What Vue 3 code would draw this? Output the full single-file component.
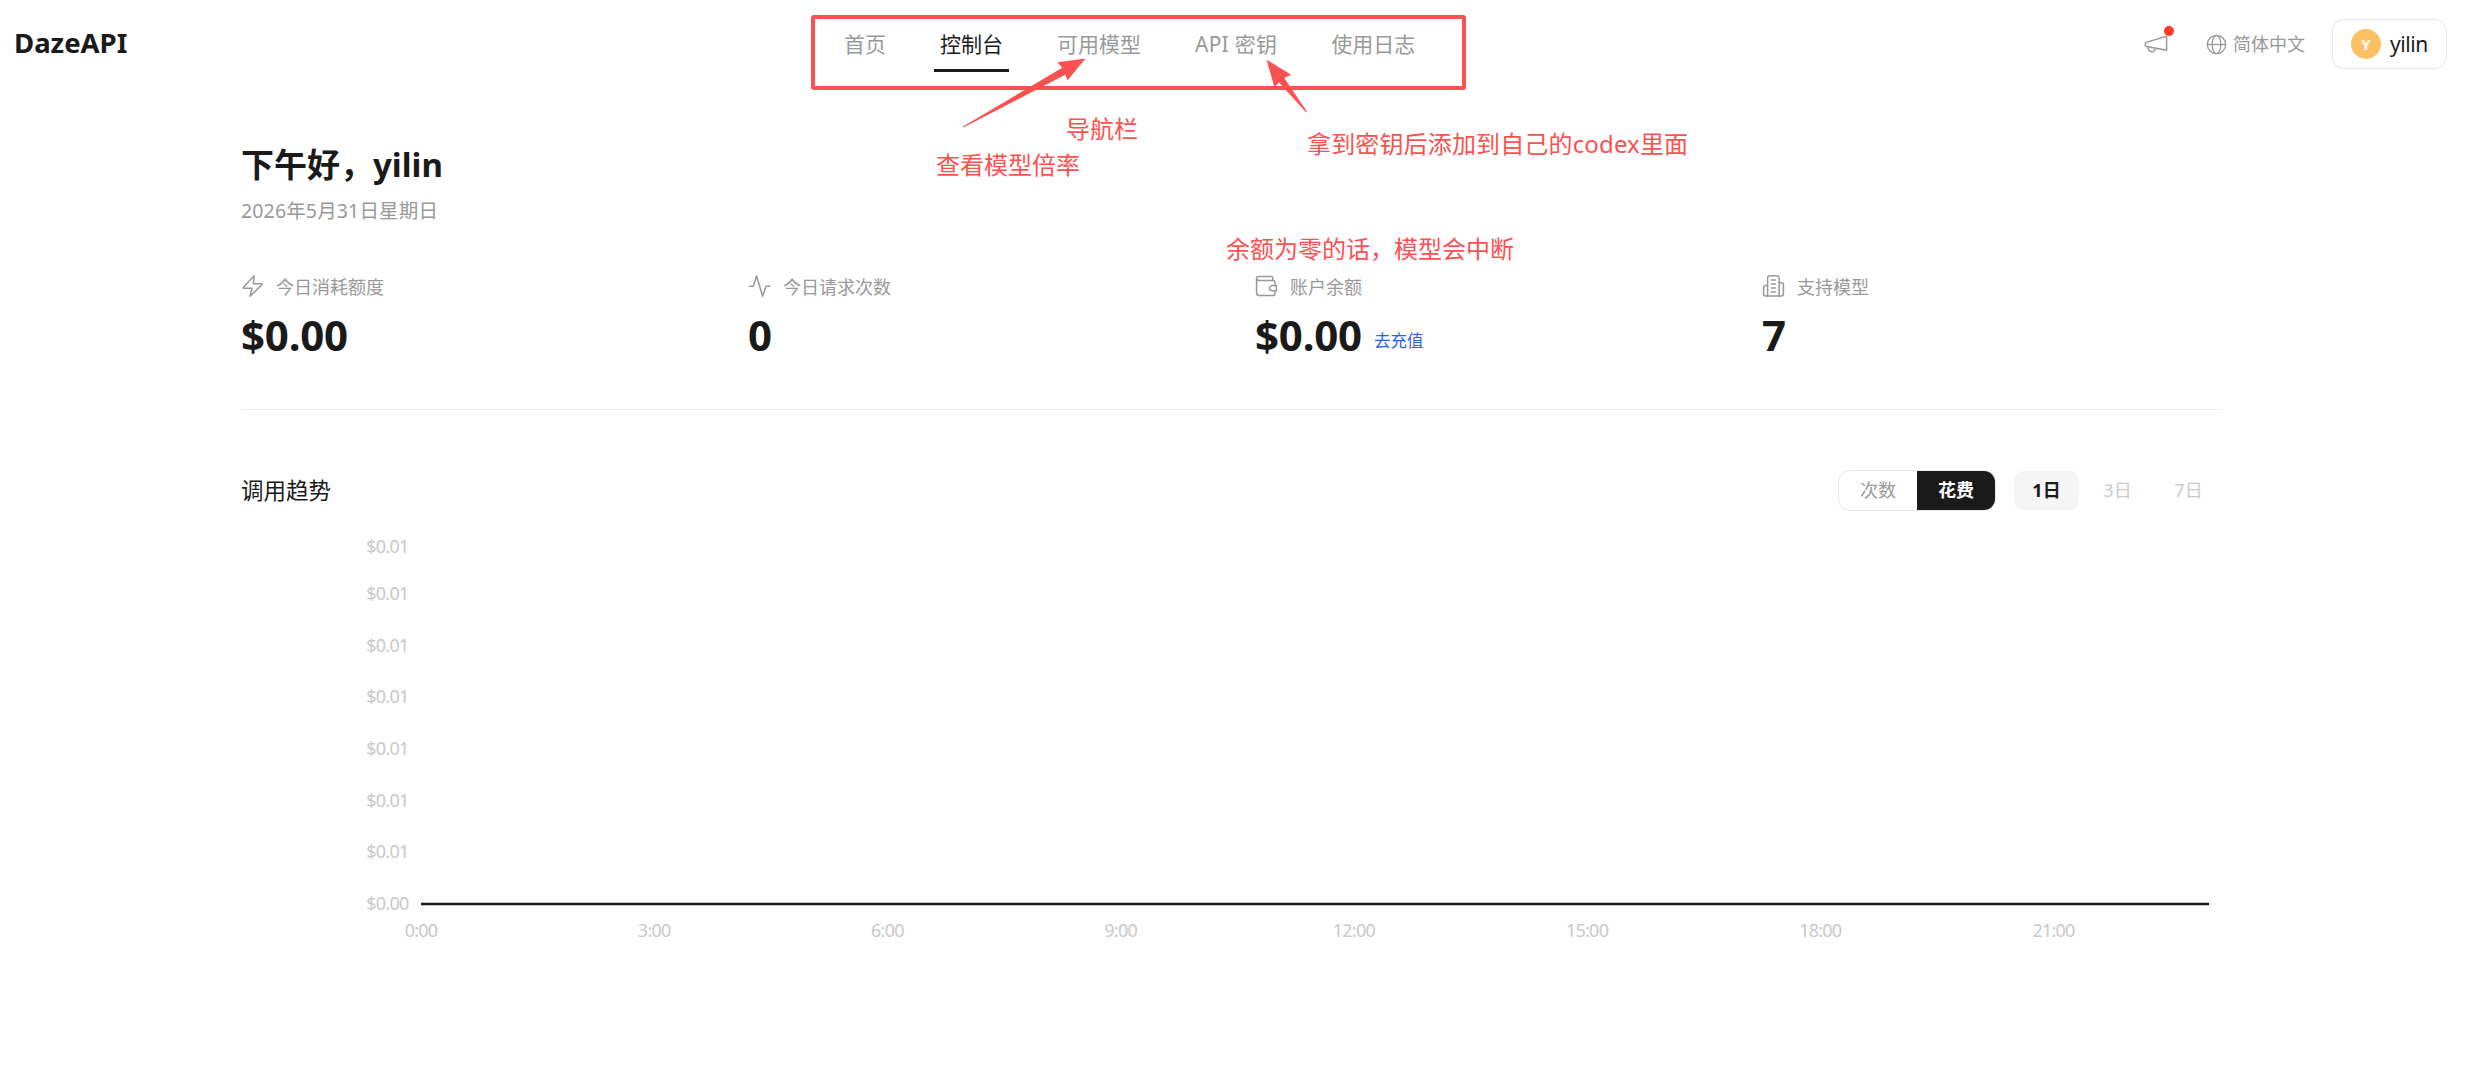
<script setup>
import { ref, computed } from 'vue'

const navItems = [
  { key: 'home', label: '首页' },
  { key: 'console', label: '控制台' },
  { key: 'models', label: '可用模型' },
  { key: 'keys', label: 'API 密钥' },
  { key: 'logs', label: '使用日志' },
]
const activeNav = ref('console')

const stats = [
  { key: 'cost', label: '今日消耗额度', value: '$0.00' },
  { key: 'requests', label: '今日请求次数', value: '0' },
  { key: 'balance', label: '账户余额', value: '$0.00', link: '去充值' },
  { key: 'models', label: '支持模型', value: '7' },
]

const metrics = ['次数', '花费']
const metric = ref('花费')
const ranges = ['1日', '3日', '7日']
const range = ref('1日')

// 图表坐标
const CHART = { left: 180, right: 1968, base: 374, hours: 23 }
const yLabels = [
  { y: 17, text: '$0.01' },
  { y: 64, text: '$0.01' },
  { y: 116, text: '$0.01' },
  { y: 167, text: '$0.01' },
  { y: 219, text: '$0.01' },
  { y: 271, text: '$0.01' },
  { y: 322, text: '$0.01' },
  { y: 374, text: '$0.00' },
]
const xLabels = computed(() => {
  const step = (CHART.right - CHART.left) / CHART.hours
  return [0, 3, 6, 9, 12, 15, 18, 21].map(h => ({ x: CHART.left + h * step, text: `${h}:00` }))
})
</script>

<template>
  <div class="page" lang="zh-CN">
    <header class="header">
      <div class="brand">DazeAPI</div>
      <nav class="nav">
        <a
          v-for="item in navItems"
          :key="item.key"
          class="nav-item"
          :class="{ active: activeNav === item.key }"
          @click="activeNav = item.key"
        >{{ item.label }}</a>
      </nav>
      <div class="tools">
        <div class="notice">
          <svg width="26" height="22" viewBox="0 0 26 22" fill="none" stroke="#999" stroke-width="1.5" stroke-linejoin="round">
            <path d="M2.4 7.6 L23.6 1.2 V15.3 L2.4 11.2 Z" />
            <path d="M5.2 12 C5.2 18 12.2 18.2 12.2 13.2" />
          </svg>
          <span class="dot"></span>
        </div>
        <div class="lang">
          <svg width="21" height="21" viewBox="0 0 21 21" fill="none" stroke="#999" stroke-width="1.3">
            <circle cx="10.5" cy="10.5" r="9.2" />
            <ellipse cx="10.5" cy="10.5" rx="4.3" ry="9.2" />
            <path d="M1.3 10.5 H19.7" />
          </svg>
          <span>简体中文</span>
        </div>
        <div class="user">
          <span class="avatar">Y</span>
          <span class="user-name">yilin</span>
        </div>
      </div>
    </header>

    <main class="main">
      <h1 class="hello">下午好，yilin</h1>
      <p class="date">2026年5月31日星期日</p>

      <section class="stats">
        <div v-for="s in stats" :key="s.key" class="stat">
          <div class="stat-label">
            <svg width="24" height="24" viewBox="0 0 24 24" fill="none" stroke="#999" stroke-width="1.5" stroke-linecap="round" stroke-linejoin="round">
              <path v-if="s.key === 'cost'" d="M13.2 1.8 L2.4 13.2 Q1.9 14.2 3 14.2 H11 L9 22.2 L20.9 10.8 Q21.4 9.7 20.4 9.7 H12.4 Z" />
              <path v-else-if="s.key === 'requests'" d="M1.6 12.2 H5.2 L8.6 2 L14.6 22.2 L18 12.2 H21.8" />
              <g v-else-if="s.key === 'balance'">
                <path d="M17.8 6.4 V4.2 Q17.8 2.6 16.2 2.6 H3.6 Q1.6 2.6 1.6 4.6 V19.2 Q1.6 21.4 3.8 21.4 H17.8 Q20 21.4 20 19.2 V17" />
                <path d="M1.6 5 Q1.9 6.4 3.6 6.4 H17.8 Q20 6.4 20 8.6 V11.4" />
                <path d="M21.4 11.6 H17.4 Q14.6 11.9 14.6 14.2 Q14.6 16.4 17.4 16.7 H21.4 Z" />
              </g>
              <g v-else>
                <path d="M5.6 22 V4 Q5.6 1.8 7.8 1.8 H15 Q17.2 1.8 17.2 4 V22" />
                <path d="M5.6 11.4 H3.8 Q1.6 11.4 1.6 13.6 V19.8 Q1.6 22 3.8 22 H19.2 Q21.4 22 21.4 19.8 V10.8 Q21.4 8.8 19.4 8.8 H17.2" />
                <path d="M9.4 6 H13.4 M9.4 10 H13.4 M9.4 14 H13.4 M9.4 18 H13.4" />
              </g>
            </svg>
            <span>{{ s.label }}</span>
          </div>
          <div class="stat-value">
            <span>{{ s.value }}</span>
            <a v-if="s.link" class="recharge">{{ s.link }}</a>
          </div>
        </div>
      </section>

      <section class="trend">
        <div class="trend-head">
          <h2 class="trend-title">调用趋势</h2>
          <div class="filters">
            <div class="segment">
              <button v-for="m in metrics" :key="m" :class="{ on: metric === m }" @click="metric = m">{{ m }}</button>
            </div>
            <div class="ranges">
              <button v-for="r in ranges" :key="r" :class="{ on: range === r }" @click="range = r">{{ r }}</button>
            </div>
          </div>
        </div>
        <svg class="chart" width="1980" height="420" viewBox="0 0 1980 420">
          <text v-for="l in yLabels" :key="l.y" class="tick tick-y" x="167.5" :y="l.y + 5.5">{{ l.text }}</text>
          <line :x1="CHART.left" :x2="CHART.right" :y1="CHART.base" :y2="CHART.base" stroke="#1a1a1a" stroke-width="2.4" />
          <text v-for="l in xLabels" :key="l.text" class="tick tick-x" :x="l.x" y="407">{{ l.text }}</text>
        </svg>
      </section>
    </main>

    <!-- 说明标注 -->
    <div class="marks">
      <div class="mark-box"></div>
      <svg class="mark-arrows" width="2468" height="140" viewBox="0 0 2468 140" fill="#fc5151">
        <path d="M1085.5 58.5 L1057.3 62.3 L1062.3 67.7 L963 126.5 L963.4 127.5 L1065.3 74.7 L1067.7 80.3 Z" />
        <path d="M1266.6 59.8 L1291.2 74.7 L1284.3 78 L1306.8 111.6 L1306 112.2 L1279 82.5 L1274.3 87 Z" />
      </svg>
      <span class="mark m-nav">导航栏</span>
      <span class="mark m-rate">查看模型倍率</span>
      <span class="mark m-key">拿到密钥后添加到自己的codex里面</span>
      <span class="mark m-balance">余额为零的话，模型会中断</span>
    </div>
  </div>
</template>

<style>
body { margin: 0; background: #fefefe; }
</style>

<style scoped>
.page {
  position: relative; width: 2468px; height: 1070px; overflow: hidden;
  background: #fefefe; color: #1a1a1a;
  font-family: "Noto Sans", "Noto Sans CJK SC", sans-serif;
}
button { font-family: inherit; border: none; background: none; margin: 0; cursor: pointer; }

.header {
  display: grid; grid-template-columns: 838px 1fr auto; align-items: center;
  height: 88px; padding-right: 21px; box-sizing: border-box;
}
.brand { padding: 0 0 3px 14px; font-size: 27.5px; font-weight: 700; }
.nav { display: flex; gap: 42px; }
.nav-item {
  padding: 0 6px 11px; margin-top: 13px; line-height: 28px; font-size: 21px;
  color: #999; border-bottom: 3px solid transparent; white-space: nowrap; cursor: pointer;
}
.nav-item.active { color: #1a1a1a; border-bottom-color: #1a1a1a; }
.nav-item:nth-child(4) { letter-spacing: 0.25px; }

.tools { display: flex; align-items: center; }
.notice { position: relative; display: flex; margin: 3px 37px 0 0; }
.dot { position: absolute; right: -5px; top: -9px; width: 10px; height: 10px; border-radius: 50%; background: #ff3b22; }
.lang { display: flex; align-items: center; gap: 6px; margin-right: 27px; font-size: 18px; color: #999; }
.lang span { margin-top: -2px; }
.user {
  display: flex; align-items: center; gap: 9px; width: 115px; height: 50px; padding-left: 18px;
  box-sizing: border-box; border: 1px solid #e8e8e8; border-radius: 12px;
}
.avatar {
  width: 30px; height: 30px; line-height: 30px; border-radius: 50%; text-align: center;
  background: #fdc165; color: #fff; font-size: 15px; font-weight: 700;
}
.user-name { font-size: 21px; letter-spacing: -0.4px; margin-top: -1px; }

.main { width: 1980px; padding: 54px 0 0 241px; }
.hello { margin: 0; font-size: 33px; line-height: 46px; font-weight: 700; }
.date { margin: 9px 0 0; font-size: 19.5px; line-height: 28px; color: #999; letter-spacing: 0.15px; }

.stats {
  display: grid; grid-template-columns: repeat(4, 1fr); column-gap: 48px;
  margin-top: 47px; padding-bottom: 47px; border-bottom: 1px solid #eee;
}
.stat-label { display: flex; align-items: center; gap: 11px; height: 28px; font-size: 18px; color: #999; }
.stat-value { display: flex; align-items: baseline; gap: 12px; margin-top: 8px; height: 54px; line-height: 54px; font-size: 42px; font-weight: 700; letter-spacing: -0.2px; }
.recharge { font-size: 16.5px; font-weight: 400; color: #2563eb; letter-spacing: 0; padding-bottom: 3px; align-self: flex-end; line-height: 36px; }

.trend { padding-top: 60px; }
.trend-head { display: flex; align-items: center; justify-content: space-between; height: 41px; }
.trend-title { margin: -2px 0 0; font-size: 22.5px; font-weight: 400; }
.filters { display: flex; align-items: center; gap: 18px; }
.segment { display: flex; height: 41px; box-sizing: border-box; border: 1px solid #e8e8e8; border-radius: 12px; overflow: hidden; }
.segment button { width: 78px; padding: 0 0 3px; font-size: 18px; color: #999; }
.segment button.on { background: #1a1a1a; color: #fff; font-weight: 700; }
.ranges { display: flex; gap: 6px; }
.ranges button { width: 65px; height: 39px; padding: 0 0 3px; border-radius: 9px; font-size: 18px; color: #ccc; }
.ranges button.on { background: #f5f5f5; color: #1a1a1a; font-weight: 700; }

.chart { display: block; margin-top: 19px; }
.tick { font-size: 18px; fill: #c9c9c9; letter-spacing: -0.75px; }
.tick-y { text-anchor: end; }
.tick-x { text-anchor: middle; }

.marks { position: absolute; inset: 0; pointer-events: none; }
.mark-box { position: absolute; left: 811px; top: 15px; width: 655px; height: 75px; box-sizing: border-box; border: 4px solid #fc5151; border-radius: 3px; }
.mark-arrows { position: absolute; left: 0; top: 0; }
.mark { position: absolute; font-size: 24px; line-height: 34px; color: #fc5151; white-space: nowrap; }
.m-nav { left: 1066px; top: 112px; }
.m-rate { left: 936px; top: 148px; }
.m-key { left: 1307px; top: 127px; letter-spacing: 0.15px; }
.m-balance { left: 1226px; top: 232px; }
</style>
